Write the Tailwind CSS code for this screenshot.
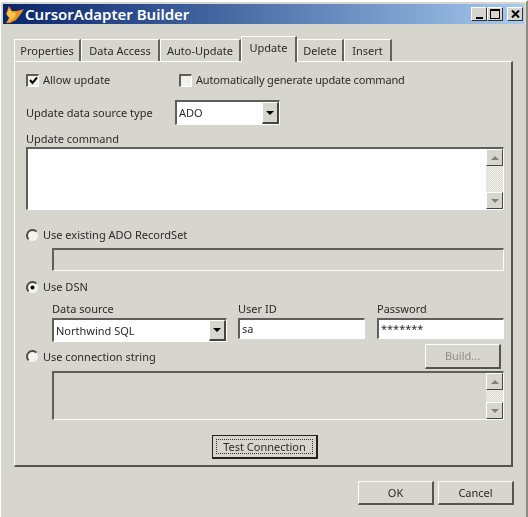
<!DOCTYPE html>
<html lang="en">
<head>
  <meta charset="UTF-8">
  <title>CursorAdapter Builder</title>
  <script src="https://cdn.jsdelivr.net/npm/@tailwindcss/browser@4"></script>
</head>
<body class="bg-[#d6d5ce] font-['Noto_Sans',sans-serif] text-[11px] leading-[14px] text-[#2a2a2a]">
  <div class="w-[528px] h-[517px] overflow-hidden flex flex-col border-l border-t-2 border-r-2 border-white border-r-[#8c8b86] blur-[0.35px]">

    <!-- title bar -->
    <div class="mx-[2px] mt-[2px] h-[20px] shrink-0 flex items-center bg-gradient-to-r from-[#0a246a] to-[#a6caf0]">
      <svg class="ml-[2px] w-[20px] h-[20px]" viewBox="0 0 20 20">
        <path d="M4 2 L7 7 L12 7 L19 5 L15 11 L11 16 L5 19 L1 19 L4 14 L1 10 Z" fill="#e8941e"/>
        <path d="M4 5 L7 8 L11 9 L10 13 L5 17 L3 18 L5 14 L2 10 Z" fill="#fcc44e"/>
      </svg>
      <span class="font-['Noto_Sans',sans-serif] font-semibold text-[15px] text-white">CursorAdapter Builder</span>
      <div class="ml-auto mr-[1px] flex">
        <div class="w-[16px] h-[14px] bg-[#d6d5ce] border border-white border-r-[#333] border-b-[#333] flex items-end justify-center"><div class="w-[7px] h-[2px] bg-black mb-[1px]"></div></div>
        <div class="w-[16px] h-[14px] bg-[#d6d5ce] border border-white border-r-[#333] border-b-[#333] flex items-center justify-center"><div class="w-[10px] h-[10px] border border-t-2 border-black"></div></div>
        <div class="ml-[4px] w-[16px] h-[14px] bg-[#d6d5ce] border border-white border-r-[#333] border-b-[#333] flex items-center justify-center">
          <svg class="w-[9px] h-[8px]" viewBox="0 0 9 8"><path d="M1 0.5 L8 7.5 M8 0.5 L1 7.5" stroke="#000" stroke-width="2"/></svg>
        </div>
      </div>
    </div>

    <!-- tabs -->
    <div class="ml-[13px] mt-[12px] h-[25px] shrink-0 flex items-end relative z-10">
      <div class="w-[67px] h-[22px] flex items-center justify-center border-t border-l border-white border-r-2 border-r-[#62625d]">Properties</div>
      <div class="w-[79px] h-[22px] flex items-center justify-center border-t border-l border-white border-r-2 border-r-[#62625d]">Data Access</div>
      <div class="w-[81px] h-[22px] flex items-center justify-center border-t border-l border-white border-r-2 border-r-[#62625d]">Auto-Update</div>
      <div class="w-[56px] h-[26px] -mb-[1px] pb-[3px] bg-[#d6d5ce] flex items-center justify-center border-t border-l border-white border-r-2 border-r-[#62625d]">Update</div>
      <div class="w-[47px] h-[22px] flex items-center justify-center border-t border-l border-white border-r-2 border-r-[#62625d]">Delete</div>
      <div class="w-[48px] h-[22px] flex items-center justify-center border-t border-l border-white border-r-2 border-r-[#62625d]">Insert</div>
    </div>

    <!-- page -->
    <div class="ml-[13px] w-[499px] h-[406px] shrink-0 pl-[11px] border-t border-l border-white border-r-2 border-b-2 border-r-[#55554f] border-b-[#55554f]">

      <div class="mt-[10px] h-[16px] flex items-center">
        <div class="w-[13px] h-[13px] bg-[#f1f0ec] border-t-2 border-l-2 border-r border-b border-[#5f5f5a] border-r-white border-b-white flex items-center justify-center">
          <svg class="w-[9px] h-[9px]" viewBox="0 0 9 9"><path d="M1 4 L3.5 7 L8 1.5" fill="none" stroke="#000" stroke-width="2"/></svg>
        </div>
        <span class="ml-[4px] w-[136px]">Allow update</span>
        <div class="w-[13px] h-[13px] bg-[#f1f0ec] border-t-2 border-l-2 border-r border-b border-[#5f5f5a] border-r-white border-b-white"></div>
        <span class="ml-[4px] tracking-[-0.16px]">Automatically generate update command</span>
      </div>

      <div class="mt-[12px] h-[25px] flex items-center">
        <span class="w-[149px]">Update data source type</span>
        <div class="w-[105px] h-[25px] bg-white border-t-2 border-l-2 border-r border-b border-[#5f5f5a] border-r-white border-b-white flex items-center pl-[2px]">
          <span class="flex-1">ADO</span>
          <div class="w-[17px] h-full bg-[#d6d5ce] border border-white border-r-[#444] border-b-[#444] border-r-2 border-b-2 flex items-center justify-center">
            <div class="w-0 h-0 border-x-[4px] border-x-transparent border-t-[4px] border-t-black"></div>
          </div>
        </div>
      </div>

      <div class="mt-[7px] h-[14px]">Update command</div>
      <div class="mt-[1px] w-[478px] h-[63px] bg-white border-t-2 border-l-2 border-r border-b border-[#5f5f5a] border-r-white border-b-white flex justify-end">
        <div class="w-[17px] h-full flex flex-col justify-between bg-[conic-gradient(#f4f4f1_25%,#d6d5ce_0_50%,#f4f4f1_0_75%,#d6d5ce_0)] bg-[length:2px_2px]">
          <div class="h-[17px] bg-[#d6d5ce] border border-white border-r-[#444] border-b-[#444] flex items-center justify-center"><div class="w-0 h-0 border-x-[4px] border-x-transparent border-b-[4px] border-b-[#808080]"></div></div>
          <div class="h-[17px] bg-[#d6d5ce] border border-white border-r-[#444] border-b-[#444] flex items-center justify-center"><div class="w-0 h-0 border-x-[4px] border-x-transparent border-t-[4px] border-t-[#808080]"></div></div>
        </div>
      </div>

      <div class="mt-[17px] h-[16px] flex items-center">
        <svg class="w-[13px] h-[13px] shrink-0" viewBox="0 0 13 13"><circle cx="6.5" cy="6.5" r="5.5" fill="#f4f4f1"/><path d="M2.6 10.4 A5.5 5.5 0 0 1 10.4 2.6" fill="none" stroke="#4f4f4a" stroke-width="2"/></svg>
        <span class="ml-[4px]">Use existing ADO RecordSet</span>
      </div>
      <div class="mt-[5px] ml-[26px] w-[452px] h-[23px] border-t-2 border-l-2 border-r border-b border-[#5f5f5a] border-r-white border-b-white"></div>

      <div class="mt-[8px] h-[16px] flex items-center">
        <svg class="w-[13px] h-[13px] shrink-0" viewBox="0 0 13 13"><circle cx="6.5" cy="6.5" r="5.5" fill="#f4f4f1"/><path d="M2.6 10.4 A5.5 5.5 0 0 1 10.4 2.6" fill="none" stroke="#4f4f4a" stroke-width="2"/><circle cx="6.5" cy="6.5" r="2" fill="#000"/></svg>
        <span class="ml-[4px]">Use DSN</span>
      </div>

      <div class="mt-[7px] ml-[26px] h-[14px] flex">
        <span class="w-[186px]">Data source</span>
        <span class="w-[139px]">User ID</span>
        <span>Password</span>
      </div>

      <div class="mt-[2px] ml-[26px] h-[24px] flex items-start">
        <div class="w-[175px] h-[24px] bg-white border-t-2 border-l-2 border-r border-b border-[#5f5f5a] border-r-white border-b-white flex items-center pl-[2px]">
          <span class="flex-1">Northwind SQL</span>
          <div class="w-[17px] h-full bg-[#d6d5ce] border border-white border-r-[#444] border-b-[#444] border-r-2 border-b-2 flex items-center justify-center">
            <div class="w-0 h-0 border-x-[4px] border-x-transparent border-t-[4px] border-t-black"></div>
          </div>
        </div>
        <div class="ml-[11px] w-[127px] h-[21px] bg-white border-t-2 border-l-2 border-r border-b border-[#5f5f5a] border-r-white border-b-white flex items-center pl-[2px]">sa</div>
        <div class="ml-[12px] w-[127px] h-[21px] bg-white border-t-2 border-l-2 border-r border-b border-[#5f5f5a] border-r-white border-b-white flex items-center pl-[2px]">*******</div>
      </div>

      <div class="mt-[2px] w-[475px] h-[25px] flex items-center">
        <svg class="w-[13px] h-[13px] shrink-0" viewBox="0 0 13 13"><circle cx="6.5" cy="6.5" r="5.5" fill="#f4f4f1"/><path d="M2.6 10.4 A5.5 5.5 0 0 1 10.4 2.6" fill="none" stroke="#4f4f4a" stroke-width="2"/></svg>
        <span class="ml-[4px]">Use connection string</span>
        <div class="ml-auto w-[76px] h-[25px] flex items-center justify-center text-[#8f8f8a] border border-white border-r-2 border-b-2 border-r-[#55554f] border-b-[#55554f]">Build...</div>
      </div>

      <div class="mt-[2px] ml-[26px] w-[452px] h-[49px] border-t-2 border-l-2 border-r border-b border-[#5f5f5a] border-r-white border-b-white flex justify-end">
        <div class="w-[17px] h-full flex flex-col justify-between bg-[conic-gradient(#f4f4f1_25%,#d6d5ce_0_50%,#f4f4f1_0_75%,#d6d5ce_0)] bg-[length:2px_2px]">
          <div class="h-[17px] bg-[#d6d5ce] border border-white border-r-[#444] border-b-[#444] flex items-center justify-center"><div class="w-0 h-0 border-x-[4px] border-x-transparent border-b-[4px] border-b-[#808080]"></div></div>
          <div class="h-[17px] bg-[#d6d5ce] border border-white border-r-[#444] border-b-[#444] flex items-center justify-center"><div class="w-0 h-0 border-x-[4px] border-x-transparent border-t-[4px] border-t-[#808080]"></div></div>
        </div>
      </div>

      <div class="mt-[15px] ml-[186px] w-[106px] h-[24px] p-[3px] border border-[#222] border-r-2 border-b-2">
        <div class="w-full h-full flex items-center justify-center border border-dotted border-[#333]">Test Connection</div>
      </div>
    </div>

    <!-- dialog buttons -->
    <div class="mt-[14px] pr-[12px] flex justify-end gap-[4px]">
      <div class="w-[76px] h-[24px] flex items-center justify-center border border-white border-r-2 border-b-2 border-r-[#55554f] border-b-[#55554f]">OK</div>
      <div class="w-[76px] h-[24px] flex items-center justify-center border border-white border-r-2 border-b-2 border-r-[#55554f] border-b-[#55554f]">Cancel</div>
    </div>
  </div>
</body>
</html>
